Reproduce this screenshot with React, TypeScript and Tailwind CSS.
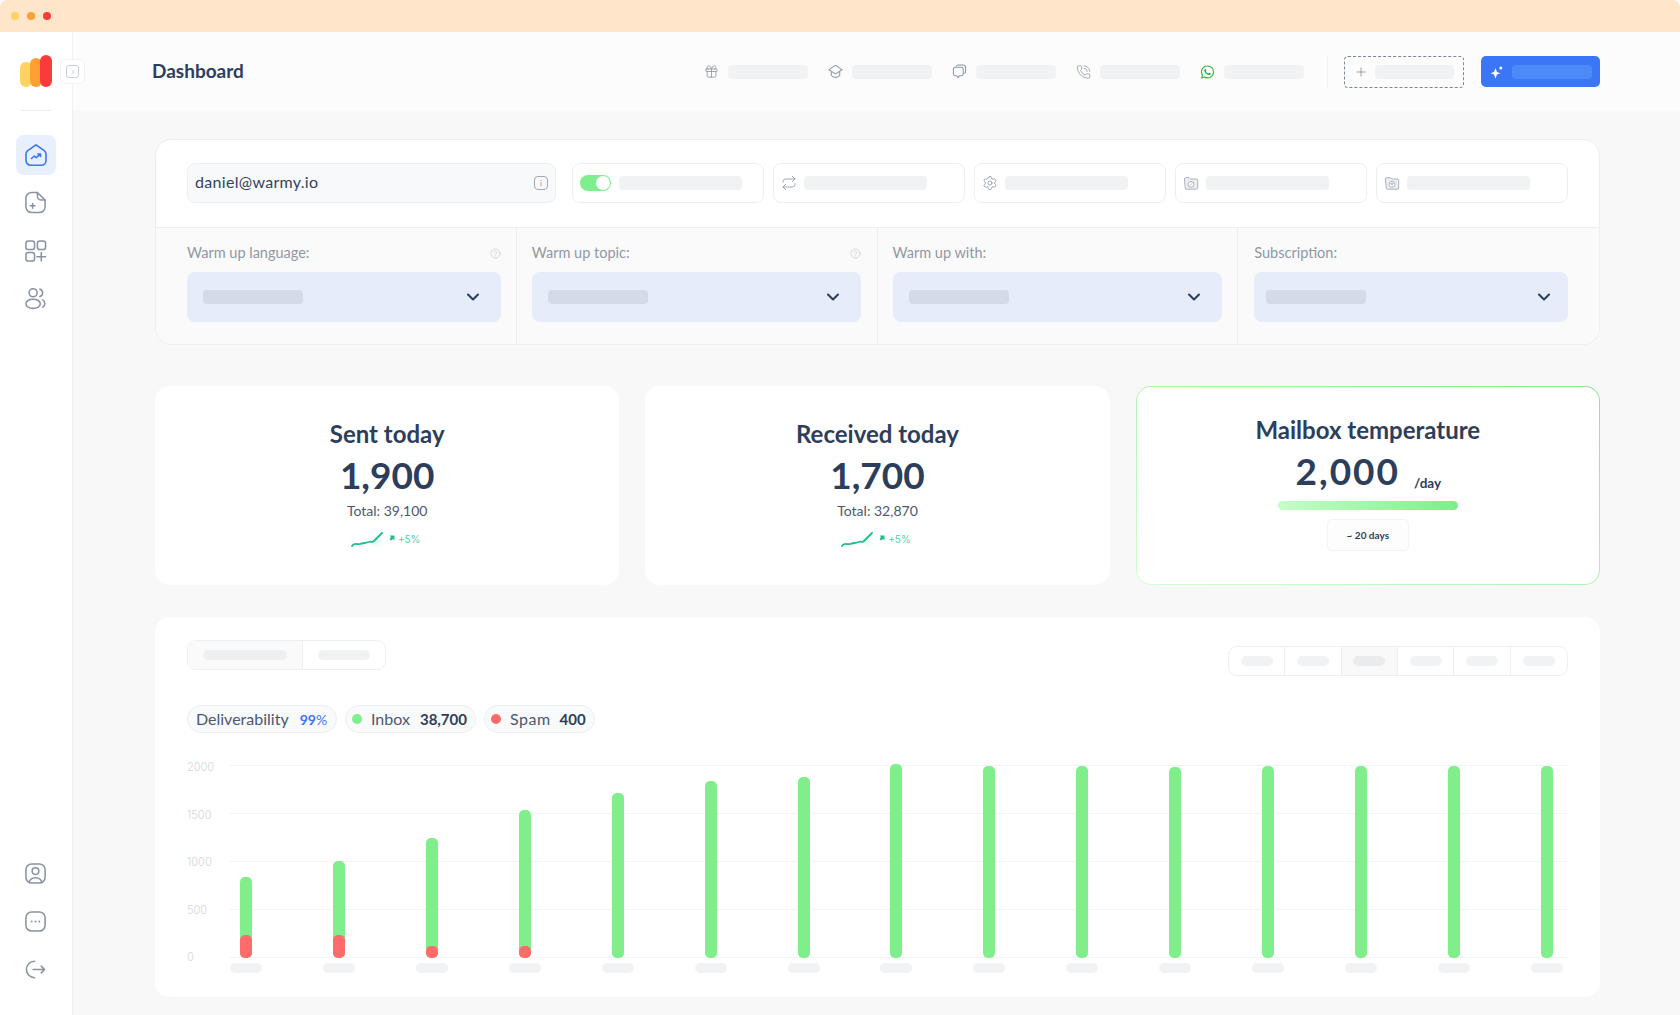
import { ChevronDown, CircleHelp, Gift, PhoneCall, Plus, Repeat, Settings } from 'lucide-react';
import { IoLogoWhatsapp } from 'react-icons/io5';

const bars = [
  { h: 81, red: 23 },
  { h: 97, red: 23 },
  { h: 120, red: 12 },
  { h: 148, red: 12 },
  { h: 165, red: 0 },
  { h: 177, red: 0 },
  { h: 181, red: 0 },
  { h: 194, red: 0 },
  { h: 192, red: 0 },
  { h: 192, red: 0 },
  { h: 191, red: 0 },
  { h: 192, red: 0 },
  { h: 192, red: 0 },
  { h: 192, red: 0 },
  { h: 192, red: 0 },
];

function Ph({ className }: { className: string }) {
  return <div className={`rounded-[4px] bg-[#f1f2f4] ${className}`} />;
}

function NavIcon({ children }: { children: React.ReactNode }) {
  return (
    <svg viewBox="0 0 24 24" className="w-[23px] h-[23px]" fill="none" stroke="#8a93a3" strokeWidth="1.6" strokeLinecap="round" strokeLinejoin="round">
      {children}
    </svg>
  );
}

function FolderIcon({ mark }: { mark: React.ReactNode }) {
  return (
    <svg viewBox="0 0 18 18" className="w-[16px] h-[16px] shrink-0" fill="#eceef0" stroke="#9aa1ad" strokeWidth="0.9" strokeLinejoin="round">
      <path d="M1.5 4.5 a1.5 1.5 0 0 1 1.5-1.5 h4 l1.5 1.5 h6.5 a1.5 1.5 0 0 1 1.5 1.5 v8.5 a1.5 1.5 0 0 1-1.5 1.5 h-11 a1.5 1.5 0 0 1-1.5-1.5 z" />
      <circle cx="9" cy="10.5" r="3.3" fill="#fff" />
      {mark}
    </svg>
  );
}

function HeaderItem({ icon }: { icon: React.ReactNode }) {
  return (
    <div className="flex items-center gap-[9px]">
      <div className="w-[15px] flex justify-center">{icon}</div>
      <Ph className="w-[80px] h-[14px]" />
    </div>
  );
}

function OptionBox({ icon }: { icon: React.ReactNode }) {
  return (
    <div className="w-[192px] h-[40px] rounded-lg border border-[#eceef0] bg-white flex items-center pl-[7px] gap-[7px]">
      {icon}
      <Ph className="w-[123px] h-[14px]" />
    </div>
  );
}

function SelectCol({ label, help, className, inner = 'pl-[16px] pr-[18px]' }: { label: string; help?: boolean; className: string; inner?: string }) {
  return (
    <div className={`pt-[15px] ${className}`}>
      <div className="flex items-center justify-between h-[20px] mb-[9px]">
        <span className="text-[14.5px] text-[#9098a5]">{label}</span>
        {help && <CircleHelp size={11} color="#c6c9ce" strokeWidth={1.5} />}
      </div>
      <div className={`h-[50px] rounded-lg bg-[#e6ecf9] flex items-center justify-between ${inner}`}>
        <div className="w-[100px] h-[14px] rounded-[4px] bg-[#d3dae8]" />
        <ChevronDown size={20} color="#2d3e5c" strokeWidth={2.5} />
      </div>
    </div>
  );
}

function Trend() {
  return (
    <div className="flex items-center mt-[10px] h-[16px] -ml-[3px]">
      <svg viewBox="0 0 32 16" className="w-[32px] h-[16px]" fill="none">
        <defs>
          <radialGradient id="glow">
            <stop offset="0%" stopColor="#d6f7e8" />
            <stop offset="100%" stopColor="#ffffff" stopOpacity="0" />
          </radialGradient>
        </defs>
        <circle cx="26" cy="10" r="9" fill="url(#glow)" />
        <path d="M1 15 C3 11 6 14 9 13 S15 12 18 11 S21 12 23 10 S28 5 31 2" stroke="#20bd8e" strokeWidth="1.8" strokeLinecap="round" />
      </svg>
      <svg viewBox="0 0 6 6" className="w-[6px] h-[6px] ml-[6px] -mt-[3px]">
        <path d="M0.5 0.5 H5.5 V5.5 L4 4 L2 5.5 L0.5 4 L2 2 Z" fill="#20bd8e" />
      </svg>
      <span className="ml-[3px] text-[10px] text-[#52d2a8] font-['Inter',sans-serif]">+5%</span>
    </div>
  );
}

function StatCard({ title, value, total }: { title: string; value: string; total: string }) {
  return (
    <div className="bg-white rounded-[15px] h-[199px] flex flex-col items-center pt-[31px] text-[#2d3e5c]">
      <div className="text-[24px] leading-[34px] font-bold">{title}</div>
      <div className="text-[37px] leading-[44px] font-bold mt-[2px]">{value}</div>
      <div className="text-[14px] leading-[20px] mt-[4px] text-[#4b5870]">{total}</div>
      <Trend />
    </div>
  );
}

export default function App() {
  return (
    <div className="w-[1680px] h-[1015px] overflow-hidden bg-[#f8f8f8] flex flex-col font-['Lato',sans-serif]">
      {/* Window bar */}
      <div className="h-[32px] shrink-0 bg-[#ffe5c9] rounded-t-lg flex items-center pl-[11px] gap-2">
        <div className="w-2 h-2 rounded-full bg-[#ffd25e]" />
        <div className="w-2 h-2 rounded-full bg-[#ff9f30]" />
        <div className="w-2 h-2 rounded-full bg-[#fb3b3b]" />
      </div>

      <div className="flex flex-1 min-h-0">
        {/* Sidebar */}
        <aside className="relative w-[73px] shrink-0 bg-white border-r border-[#f1f1f1] flex flex-col items-center pt-[23px] pr-[1px]">
          <div className="flex items-end gap-0 h-[32px] w-[32px]">
            <div className="w-[12px] h-[25px] rounded-full bg-[#ffd35f]" />
            <div className="w-[12px] h-[29px] rounded-full bg-[#ffa030] -ml-[2px]" />
            <div className="w-[12px] h-[32px] rounded-full bg-[#fb3b3b] -ml-[2px]" />
          </div>
          <div className="absolute left-[60px] top-[27px] w-[25px] h-[25px] rounded-[6px] bg-white border border-[#f2f2f2] flex items-center justify-center">
            <div className="w-[13px] h-[13px] rounded-[3px] border border-[#c9ced6] flex items-center justify-center">
              <svg viewBox="0 0 6 8" className="w-[4px] h-[6px]" fill="none" stroke="#b4bac4" strokeWidth="1"><path d="M1 1 L4.5 4 L1 7" /></svg>
            </div>
          </div>

          <div className="w-[32px] h-px bg-[#ececec] mt-[23px]" />

          <div className="mt-[24px] w-[40px] h-[40px] rounded-lg bg-[#e8effd] flex items-center justify-center">
            <svg viewBox="0 0 24 24" className="w-[24px] h-[24px]" fill="none" stroke="#3b76f6" strokeWidth="1.6" strokeLinecap="round" strokeLinejoin="round">
              <path d="M12 1.8 L20.3 7.7 Q22 9 22 11 V17.5 a4.7 4.7 0 0 1-4.7 4.7 H6.7 a4.7 4.7 0 0 1-4.7-4.7 V11 Q2 9 3.7 7.7 Z" />
              <path d="M7.5 15.5 L10.3 13 L12.2 14.6 L16.2 11.2 M13.8 11 H16.5 V13.4" />
            </svg>
          </div>
          <div className="mt-[16px]">
            <NavIcon>
              <path d="M8 1.5 H14 L22 9.5 V16.5 a6 6 0 0 1-6 6 H8 a6 6 0 0 1-6-6 V7.5 a6 6 0 0 1 6-6 Z" />
              <path d="M14 1.5 V5.5 a4 4 0 0 0 4 4 H22" />
              <path d="M9 13 V18 M6.5 15.5 H11.5" />
            </NavIcon>
          </div>
          <div className="mt-[25px]">
            <NavIcon>
              <rect x="2" y="2" width="9" height="9" rx="2.5" />
              <rect x="14" y="2" width="8.5" height="9" rx="2.5" />
              <rect x="2" y="14" width="9" height="9" rx="2.5" />
              <path d="M18 14 V23 M13.5 18.5 H22.5" />
            </NavIcon>
          </div>
          <div className="mt-[25px]">
            <NavIcon>
              <circle cx="9.5" cy="6" r="4.2" />
              <ellipse cx="9.5" cy="17.5" rx="7.5" ry="4.8" />
              <path d="M16.5 2 a4.2 4.2 0 0 1 0 8 M19.5 13.5 c3 1.5 3 6 0 7.5" />
            </NavIcon>
          </div>

          <div className="mt-auto pb-[34px] flex flex-col items-center gap-[25px]">
            <NavIcon>
              <rect x="2" y="2" width="20" height="20" rx="6" />
              <circle cx="12" cy="9.5" r="3.5" />
              <path d="M5.5 21.5 a6.5 5 0 0 1 13 0" />
            </NavIcon>
            <NavIcon>
              <rect x="2" y="2" width="20" height="20" rx="6" />
              <path d="M8 12 H8.01 M12 12 H12.01 M16 12 H16.01" strokeWidth="2" />
            </NavIcon>
            <NavIcon>
              <path d="M11 3.5 a8.5 8.5 0 1 0 0 17" />
              <path d="M9.5 12 H21.5 M18 8.5 L21.5 12 L18 15.5" />
            </NavIcon>
          </div>
        </aside>

        <main className="flex-1 min-w-0 flex flex-col">
          {/* Header */}
          <header className="h-[79px] shrink-0 bg-[#fcfcfc] flex items-center pl-[79px] pr-[80px]">
            <div className="text-[19px] font-bold text-[#2d3e5c]">Dashboard</div>
            <div className="ml-auto flex items-center gap-[20px]">
              <HeaderItem icon={<Gift size={17} color="#8a93a3" strokeWidth={1.3} />} />
              <HeaderItem
                icon={
                  <svg viewBox="0 0 16 16" className="w-[17px] h-[17px]" fill="none" stroke="#8a93a3" strokeWidth="1.1" strokeLinejoin="round">
                    <path d="M8 1.5 Q8.6 1.5 9.2 2 L15 6.2 L8 10.5 L1 6.2 L6.8 2 Q7.4 1.5 8 1.5 Z" />
                    <path d="M3.5 8.5 V12 C5.5 15 10.5 15 12.5 12 V8.5" />
                  </svg>
                }
              />
              <HeaderItem
                icon={
                  <svg viewBox="0 0 16 16" className="w-[17px] h-[17px]" fill="none" stroke="#8a93a3" strokeWidth="1.1" strokeLinejoin="round">
                    <path d="M4.5 2.5 a2 2 0 0 1 2-1.5 h5.5 a2.5 2.5 0 0 1 2.5 2.5 v4.5 a2 2 0 0 1-1.5 2" />
                    <path d="M3.5 3.5 h6.5 a2 2 0 0 1 2 2 v5 a2 2 0 0 1-2 2 h-2 l-1.5 2 l-1.5-2 h-1.5 a2 2 0 0 1-2-2 v-5 a2 2 0 0 1 2-2 Z" />
                    <path d="M5 8 H5.01 M6.8 8 H6.81 M8.6 8 H8.61" />
                  </svg>
                }
              />
              <HeaderItem icon={<PhoneCall size={16} color="#8a93a3" strokeWidth={1.2} />} />
              <HeaderItem icon={<IoLogoWhatsapp size={16} color="#2bb741" />} />
            </div>
            <div className="w-px h-[32px] bg-[#f0f0f0] ml-[23px]" />
            <div className="ml-[16px] w-[120px] h-[32px] rounded-[4px] border border-dashed border-[#7d8794] flex items-center pl-[9px] gap-[7px]">
              <Plus size={14} color="#7d8794" strokeWidth={1.3} />
              <Ph className="w-[79px] h-[14px]" />
            </div>
            <div className="ml-[17px] w-[119px] h-[31px] rounded-[5px] bg-[#3b76f6] flex items-center pl-[9px] gap-[8px]">
              <svg viewBox="0 0 14 14" className="w-[14px] h-[14px]" fill="#ffffff">
                <path d="M5.5 3 L6.9 6.9 L10.5 8.3 L6.9 9.6 L5.5 13.8 L4.1 9.6 L0.5 8.3 L4.1 6.9 Z" />
                <circle cx="10.8" cy="3" r="1.5" />
              </svg>
              <div className="w-[80px] h-[14px] rounded-[4px] bg-[#4c8af7]" />
            </div>
          </header>

          <div className="flex-1 min-h-0 pt-[28px] pl-[82px] pr-[80px]">
            {/* Mailbox settings */}
            <section className="h-[206px] rounded-[17px] border border-[#eeeeee] overflow-hidden bg-white">
              <div className="flex items-center pt-[23px] pb-[24px] pl-[31px] border-b border-[#eeeeee]">
                <div className="w-[369px] h-[40px] rounded-lg border border-[#eceef0] bg-[#f8f9fa] flex items-center justify-between pl-[7px] pr-[7px]">
                  <span className="text-[16px] text-[#33435f] tracking-[0.3px] -mt-[2px]">daniel@warmy.io</span>
                  <div className="w-[14px] h-[14px] rounded-[4px] border border-[#a3a9b4] flex items-center justify-center text-[8px] leading-none text-[#8a93a3]">i</div>
                </div>
                <div className="ml-[16px] flex gap-[9px]">
                  <div className="w-[192px] h-[40px] rounded-lg border border-[#eceef0] bg-white flex items-center pl-[7px] gap-[8px]">
                    <div className="w-[31px] h-[16px] rounded-full bg-[#7fee8c] flex justify-end items-center pr-[1px]">
                      <div className="w-[14px] h-[14px] rounded-full bg-white" />
                    </div>
                    <Ph className="w-[123px] h-[14px]" />
                  </div>
                  <OptionBox icon={<Repeat size={16} color="#8a93a3" strokeWidth={1.2} />} />
                  <OptionBox icon={<Settings size={16} color="#8a93a3" strokeWidth={1.2} />} />
                  <OptionBox icon={<FolderIcon mark={<path d="M7.8 11.8 L10.3 9.2" strokeWidth="0.8" />} />} />
                  <OptionBox icon={<FolderIcon mark={<path d="M7.7 9.6 H10.3 L9 11.4 Z" strokeWidth="0.8" />} />} />
                </div>
              </div>
              <div className="grid grid-cols-4 h-[116px] bg-[#fafafa]">
                <SelectCol label="Warm up language:" help className="pl-[31px] pr-[15px] border-r border-[#eeeeee]" />
                <SelectCol label="Warm up topic:" help className="pl-[15px] pr-[16px] border-r border-[#eeeeee]" />
                <SelectCol label="Warm up with:" className="pl-[15px] pr-[15px] border-r border-[#eeeeee]" />
                <SelectCol label="Subscription:" className="pl-[16px] pr-[31px]" inner="pl-[12px] pr-[14px]" />
              </div>
            </section>

            {/* Stats */}
            <section className="grid grid-cols-3 gap-[26px] mt-[41px]">
              <StatCard title="Sent today" value="1,900" total="Total: 39,100" />
              <StatCard title="Received today" value="1,700" total="Total: 32,870" />
              <div className="h-[199px] rounded-[15px] p-px bg-linear-to-tr from-[#d2fed5] to-[#80ec89]">
                <div className="h-full rounded-[14px] bg-white flex flex-col items-center pt-[26px] text-[#2d3e5c]">
                  <div className="text-[24px] leading-[34px] font-bold">Mailbox temperature</div>
                  <div className="flex items-baseline mt-[2px] ml-[1px]">
                    <span className="text-[37px] leading-[44px] font-bold tracking-[2px]">2,000</span>
                    <span className="ml-[14px] text-[13.5px] font-bold translate-y-[3px]">/day</span>
                  </div>
                  <div className="w-[180px] h-[9px] rounded-full mt-[8px] bg-linear-to-r from-[#c5fdc8] to-[#80ec89]" />
                  <div className="w-[82px] h-[32px] mt-[9px] rounded-[5px] border border-[#f3f3f3] bg-[#fdfdfd] flex items-center justify-center text-[10px] font-bold">
                    ~ 20 days
                  </div>
                </div>
              </div>
            </section>

            {/* Chart */}
            <section className="h-[380px] mt-[32px] rounded-[15px] bg-white px-[32px] pt-[23px]">
              <div className="flex justify-between items-start h-[35px]">
                <div className="w-[199px] h-[30px] rounded-[9px] border border-[#efefef] flex overflow-hidden">
                  <div className="w-[115px] bg-[#fafafa] border-r border-[#efefef] flex items-center justify-center">
                    <div className="w-[84px] h-[10px] rounded-full bg-[#eeeff1]" />
                  </div>
                  <div className="flex-1 flex items-center justify-center">
                    <div className="w-[52px] h-[10px] rounded-full bg-[#f1f2f4]" />
                  </div>
                </div>
                <div className="mt-[6px] w-[340px] h-[30px] rounded-[9px] border border-[#efefef] grid grid-cols-6 overflow-hidden divide-x divide-[#efefef]">
                  {[0, 1, 2, 3, 4, 5].map((i) => (
                    <div key={i} className={`flex items-center justify-center ${i === 2 ? 'bg-[#f9f9f9]' : ''}`}>
                      <div className={`w-[32px] h-[10px] rounded-full ${i === 2 ? 'bg-[#eaebed]' : 'bg-[#f1f2f4]'}`} />
                    </div>
                  ))}
                </div>
              </div>

              <div className="flex gap-[8px] mt-[30px] text-[16px] text-[#4b5870]">
                <div className="h-[28px] w-[150px] rounded-full border border-[#eeeeee] bg-[#f9fafb] flex items-center pl-[8px]">
                  <span>Deliverability</span>
                  <span className="ml-[11px] text-[14px] font-bold text-[#3b76f6]">99<span className="font-normal">%</span></span>
                </div>
                <div className="h-[28px] w-[131px] rounded-full border border-[#eeeeee] bg-[#f9fafb] flex items-center pl-[6px]">
                  <div className="w-[10px] h-[10px] rounded-full bg-[#7fee8c]" />
                  <span className="ml-[9px]">Inbox</span>
                  <span className="ml-[10px] text-[15px] font-bold text-[#2d3e5c]">38,700</span>
                </div>
                <div className="h-[28px] w-[111px] rounded-full border border-[#eeeeee] bg-[#f9fafb] flex items-center pl-[6px]">
                  <div className="w-[10px] h-[10px] rounded-full bg-[#ff6b6b]" />
                  <span className="ml-[9px] tracking-[0.5px]">Spam</span>
                  <span className="ml-[9px] text-[15px] font-bold text-[#2d3e5c]">400</span>
                </div>
              </div>

              <div className="flex mt-[32px]">
                <div className="w-[43px] h-[193px] pt-[2px] flex flex-col justify-between text-[11px] text-[#d4d6da] font-['Inter',sans-serif] font-light">
                  {['2000', '1500', '1000', '500', '0'].map((l) => (
                    <div key={l} className="h-px flex items-center">{l}</div>
                  ))}
                </div>
                <div className="flex-1">
                  <div className="relative h-[193px]">
                    <div className="absolute inset-0 flex flex-col justify-between">
                      {[0, 1, 2, 3, 4].map((i) => (
                        <div key={i} className="h-px bg-[#f2f3f4]" />
                      ))}
                    </div>
                    <div className="relative h-full flex items-end justify-between pr-[5px]">
                      {bars.map((b, i) => (
                        <div key={i} className="w-[32px] flex justify-center">
                          <div className="w-[12px] rounded-[5px] bg-[#80ee8a] flex flex-col justify-end" style={{ height: b.h }}>
                            {b.red > 0 && <div className="rounded-[5px] bg-[#ff6b6b]" style={{ height: b.red }} />}
                          </div>
                        </div>
                      ))}
                    </div>
                  </div>
                  <div className="flex justify-between pr-[5px] mt-[5px]">
                    {bars.map((_, i) => (
                      <div key={i} className="w-[32px] h-[10px] rounded-full bg-[#f1f2f4]" />
                    ))}
                  </div>
                </div>
              </div>
            </section>
          </div>
        </main>
      </div>
    </div>
  );
}
